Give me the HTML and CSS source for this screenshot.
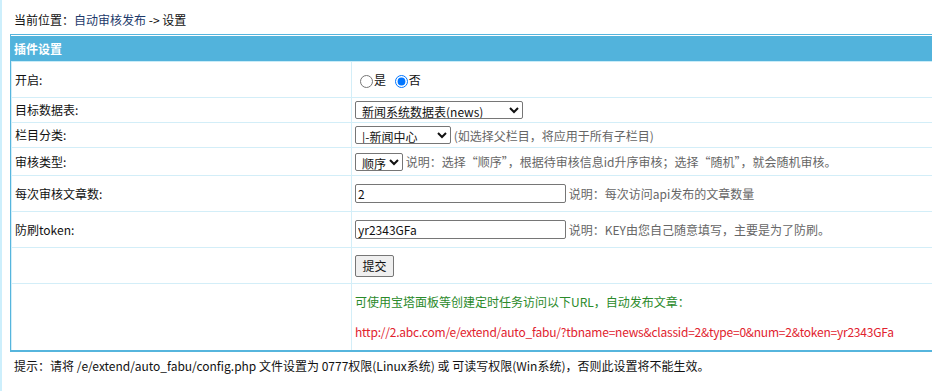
FILE: index.html
```html
<!DOCTYPE html>
<html lang="zh-CN">
<head>
<meta charset="utf-8">
<title>自动审核发布 - 设置</title>
<link rel="stylesheet" href="styles.css">
</head>
<body>
<div class="page">
  <div class="crumb">当前位置：<a class="crumb-link" href="#">自动审核发布</a> -&gt; 设置</div>
  <form class="settings">
    <table class="form-table">
      <tr class="head-row"><th colspan="2">插件设置</th></tr>
      <tr class="row-open">
        <td class="lbl">开启:</td>
        <td class="val val-open">
          <label class="radio"><input type="radio" name="open">是</label>
          <label class="radio"><input type="radio" name="open" checked>否</label>
        </td>
      </tr>
      <tr class="row-sm">
        <td class="lbl">目标数据表:</td>
        <td class="val"><select class="sel sel-table"><option>新闻系统数据表(news)</option></select></td>
      </tr>
      <tr class="row-sm">
        <td class="lbl">栏目分类:</td>
        <td class="val"><select class="sel sel-class"><option>|-新闻中心</option></select> <span class="note">(如选择父栏目，将应用于所有子栏目)</span></td>
      </tr>
      <tr class="row-md">
        <td class="lbl">审核类型:</td>
        <td class="val"><select class="sel sel-type"><option>顺序</option><option>随机</option></select> <span class="note">说明：选择“顺序”，根据待审核信息id升序审核；选择“随机”，就会随机审核。</span></td>
      </tr>
      <tr class="row-lg">
        <td class="lbl">每次审核文章数:</td>
        <td class="val"><input class="txt" type="text" value="2"> <span class="note">说明：每次访问api发布的文章数量</span></td>
      </tr>
      <tr class="row-lg">
        <td class="lbl">防刷token:</td>
        <td class="val"><input class="txt" type="text" value="yr2343GFa"> <span class="note">说明：KEY由您自己随意填写，主要是为了防刷。</span></td>
      </tr>
      <tr class="row-lg">
        <td class="lbl"></td>
        <td class="val"><button class="btn" type="button">提交</button></td>
      </tr>
      <tr class="row-url">
        <td class="lbl"></td>
        <td class="val">
          <div class="green">可使用宝塔面板等创建定时任务访问以下URL，自动发布文章：</div>
          <div class="red">http://2.abc.com/e/extend/auto_fabu/?tbname=news&amp;classid=2&amp;type=0&amp;num=2&amp;token=yr2343GFa</div>
        </td>
      </tr>
    </table>
  </form>
  <div class="tip">提示：请将 /e/extend/auto_fabu/config.php 文件设置为 0777权限(Linux系统) 或 可读写权限(Win系统)，否则此设置将不能生效。</div>
</div>
</body>
</html>
```
FILE: styles.css
```css
html {
  overflow: hidden;
  background: #fff;
}
body {
  margin: 0;
  border-left: 2px solid #cdeffc;
  min-height: 391px;
  box-sizing: border-box;
  font-family: "Noto Sans CJK SC", "Noto Sans", sans-serif;
  font-size: 12px;
  color: #111;
}
.page {
  padding: 10px 0 0 8px;
}
.crumb {
  line-height: 20px;
  padding-left: 4px;
  margin-bottom: 4px;
  color: #111;
}
.crumb-link {
  color: #1d3a6b;
  text-decoration: none;
}
.settings {
  margin: 0;
}
.form-table {
  width: 940px;
  border-collapse: separate;
  border-spacing: 0;
  border: 1px solid #56b5dd;
  border-bottom-width: 2px;
}
.form-table th {
  background: #52b3dc;
  color: #fff;
  font-weight: bold;
  text-align: left;
  height: 25px;
  padding: 0 3px;
  border-top: 1px solid #ffffff;
  border-bottom: 1px solid #c9ecf8;
  line-height: 25px;
}
.form-table td {
  padding: 0 3px;
  border-bottom: 1px solid #d3eef8;
  vertical-align: middle;
  line-height: 16px;
}
.form-table tr:last-child td {
  border-bottom: 0;
}
.lbl {
  width: 333px;
  border-left: 1px solid #d3eef8;
  border-right: 1px solid #d3eef8;
  color: #111;
}
.row-open td { height: 35px; }
.row-sm td { height: 24px; }
.row-md td { height: 27px; }
.row-lg td { height: 35px; }
.row-url td { height: 66px; }

.form-table .val-open {
  padding-top: 4px;
  height: 31px;
}
.radio {
  display: inline-flex;
  align-items: center;
  margin-right: 1px;
}
.radio input {
  margin: 3px 1px 0 5px;
}
.sel {
  font-family: inherit;
  font-size: 12px;
  height: 18px;
  padding: 0 0 0 2px;
  border: 1px solid #767676;
  border-radius: 2px;
  background: #fff;
  color: #111;
  vertical-align: middle;
}
.sel-table { width: 168px; }
.sel-class { width: 96px; }
.sel-type { width: 48px; }
.note {
  color: #666;
  vertical-align: middle;
}
.txt {
  width: 211px;
  height: 19px;
  box-sizing: border-box;
  font-family: inherit;
  font-size: 12px;
  padding: 0 2px;
  border: 1px solid #767676;
  border-radius: 2px;
  vertical-align: middle;
  color: #111;
}
.btn {
  width: 39px;
  height: 22px;
  font-family: inherit;
  font-size: 12px;
  padding: 0;
  border: 1px solid #767676;
  border-radius: 2px;
  background: #efefef;
  color: #111;
}
.green {
  color: #2a8a2a;
  line-height: 16px;
  margin-bottom: 14px;
}
.red {
  color: #e1222e;
  line-height: 16px;
  letter-spacing: -0.22px;
}
.tip {
  line-height: 20px;
  margin-top: 4px;
  padding-left: 4px;
  color: #111;
}
```
